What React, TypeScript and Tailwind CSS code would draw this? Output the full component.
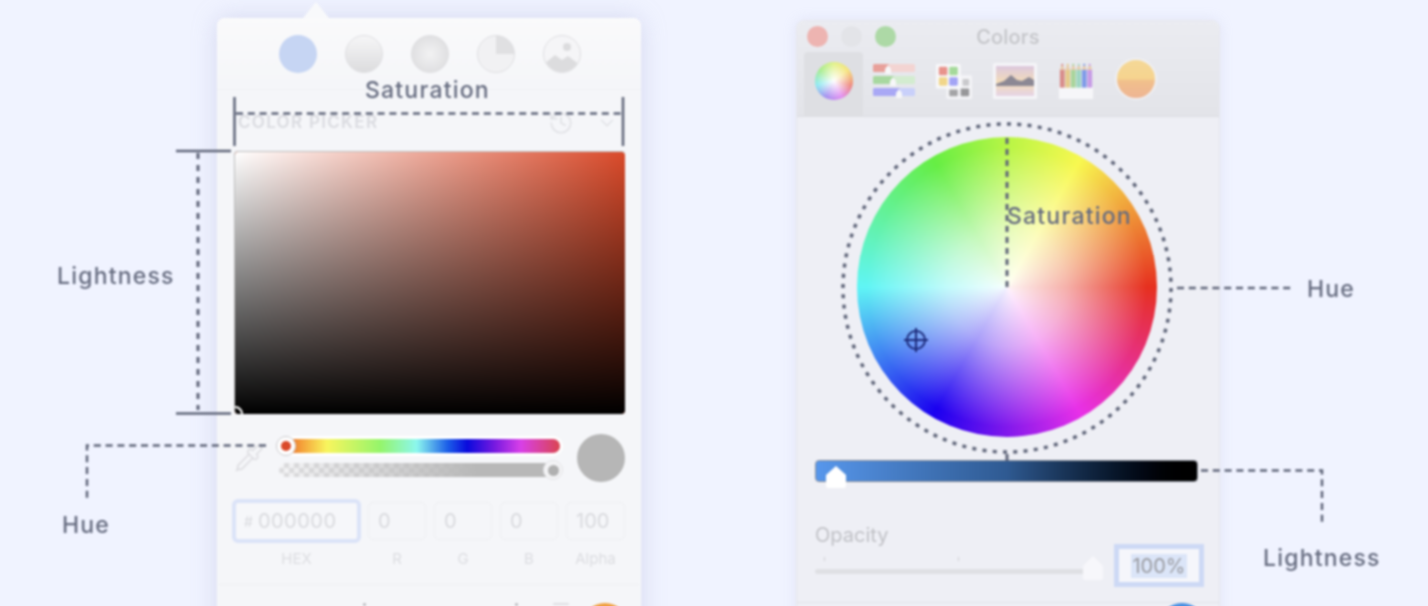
import { ChevronDown, History, Pipette } from "lucide-react";

const fields = [
  { label: "R", value: "0", width: "w-[58px]" },
  { label: "G", value: "0", width: "w-[58px]" },
  { label: "B", value: "0", width: "w-[58px]" },
  { label: "Alpha", value: "100", width: "w-[59px]" },
];

function SlidersIcon() {
  const rows = [
    { a: "#e8a09a", b: "#f3d4d2", x: 16 },
    { a: "#a8d8a0", b: "#d3ecd0", x: 21 },
    { a: "#a9a8f5", b: "#c9d0fa", x: 27 },
  ];
  return (
    <svg width="44" height="36" viewBox="0 0 44 36">
      {rows.map((r, i) => (
        <g key={i}>
          <rect x="1" y={1 + i * 12} width="42" height="8" rx="1.5" fill={r.b} />
          <rect x="1" y={1 + i * 12} width={r.x} height="8" rx="1.5" fill={r.a} />
          <path d={`M${r.x - 3} ${6 + i * 12}l3-4 3 4v5h-6z`} fill="#f7f7f9" />
        </g>
      ))}
    </svg>
  );
}

function PaletteIcon() {
  return (
    <svg width="38" height="36" viewBox="0 0 40 38">
      <rect x="12" y="13" width="27" height="25" rx="1.5" fill="#f4f4f7" />
      <rect x="29" y="17" width="7" height="7" rx="1" fill="#c9c9cc" />
      <rect x="15" y="28" width="9" height="7" rx="1" fill="#a4a4a6" />
      <rect x="27" y="27" width="9" height="8" rx="1" fill="#979799" />
      <rect x="1" y="1" width="26" height="26" rx="1.5" fill="#f8f8fa" />
      <rect x="4" y="4" width="9" height="9" rx="1.5" fill="#e8938c" />
      <rect x="15" y="4" width="9" height="9" rx="1.5" fill="#a5d99a" />
      <rect x="4" y="15" width="9" height="9" rx="1.5" fill="#f1d68a" />
      <rect x="15" y="15" width="9" height="9" rx="1.5" fill="#a3a4f5" />
    </svg>
  );
}

function PhotoIcon() {
  return (
    <svg width="44" height="36" viewBox="0 0 44 36">
      <defs>
        <linearGradient id="sky" x1="0" y1="0" x2="0" y2="1">
          <stop offset="0" stopColor="#dcc8de" />
          <stop offset="0.55" stopColor="#f3dcb8" />
          <stop offset="1" stopColor="#e5d3e6" />
        </linearGradient>
      </defs>
      <rect width="44" height="36" rx="1.5" fill="#f5f5f8" />
      <rect x="3" y="3" width="38" height="30" fill="url(#sky)" />
      <path d="M3 21l8-3 7-6 6 5 5 1 7-4 5 3v6H3z" fill="#8c8894" />
    </svg>
  );
}

function PencilsIcon() {
  const colors = ["#d88c8a", "#e6c98a", "#a8d49a", "#9ed6c2", "#7f9be8", "#c79be6"];
  return (
    <svg width="36" height="36" viewBox="0 0 36 38">
      <rect y="25" width="36" height="13" fill="#f6f6f9" />
      {colors.map((c, i) => (
        <g key={c}>
          <rect x={1 + i * 5.8} y="7" width="5" height="19" fill={c} />
          <path d={`M${1 + i * 5.8} 7l2.5-6 2.5 6z`} fill="#e8c9a8" />
          <circle cx={3.5 + i * 5.8} cy="2" r="1.2" fill={c} />
        </g>
      ))}
    </svg>
  );
}

function Annotations() {
  const ink = "#5f6579";
  return (
    <svg
      className="absolute inset-0 pointer-events-none"
      width="1428"
      height="606"
      viewBox="0 0 1428 606"
      fill="none"
      stroke={ink}
    >
      {/* color picker side */}
      <path d="M234.5 97V146M623 97V146M176 151H231M176 413.5H231" strokeWidth="2.5" />
      <path d="M236 113.5H622" strokeWidth="2.5" strokeDasharray="7 4.8" />
      <path d="M198 153V410" strokeWidth="3" strokeDasharray="6 6" />
      <path d="M266 445.5H87V498" strokeWidth="2.5" strokeDasharray="7 4.8" />
      {/* colors window side */}
      <circle cx="1007" cy="288" r="164" strokeWidth="3.5" strokeDasharray="4 6.3" />
      <path d="M1007 138V290" strokeWidth="3" strokeDasharray="6 5" />
      <path d="M1007 454V461" strokeWidth="3" />
      <path d="M1177 288H1293" strokeWidth="2.5" strokeDasharray="7 4.8" />
      <path d="M1201 470.5H1322V524" strokeWidth="2.5" strokeDasharray="7 4.8" />
    </svg>
  );
}

export default function App() {
  const label = "absolute text-[23px] font-medium leading-[28px] text-[#666c80] whitespace-nowrap tracking-[1.2px]";
  return (
    <div className="w-[1428px] h-[606px] overflow-hidden bg-[#f0f3ff]">
      <div className="relative w-[1428px] h-[606px] blur-[0.8px] flex items-start pl-[217px] pt-[18px] font-['Inter',sans-serif]">
        {/* Color picker panel */}
        <div className="relative w-[424px] h-[620px] shrink-0 rounded-t-[8px] bg-[#f5f6f9] shadow-[0_0_24px_rgba(160,165,210,0.35)]">
          <div className="absolute left-[86px] -top-[16px] w-0 h-0 border-x-[13px] border-x-transparent border-b-[16px] border-b-[#f8f9fb]" />
          <div className="h-[72px] mb-[2px] pl-[2px] border-b border-[#f0f1f4] rounded-t-[8px] bg-gradient-to-b from-[#fafafb] to-[#f5f6f9] flex items-center justify-center gap-[28px]">
            <div className="w-[38px] h-[38px] rounded-full bg-[#c6d5f3]" />
            <div className="w-[38px] h-[38px] rounded-full border border-[#dfdfe2] bg-gradient-to-b from-[#f6f6f7] to-[#dcdcde]" />
            <div className="w-[38px] h-[38px] rounded-full border border-[#dfdfe2] bg-[radial-gradient(circle,#f2f2f3_0%,#d9d9db_100%)]" />
            <div className="w-[38px] h-[38px] rounded-full border border-[#dfdfe2] bg-[conic-gradient(#e0e0e2_0deg_90deg,#f1f1f3_90deg_360deg)]" />
            <div className="w-[38px] h-[38px] rounded-full border border-[#dfdfe2] overflow-hidden bg-[#f5f5f7]">
              <svg width="36" height="36" viewBox="0 0 36 36">
                <circle cx="23" cy="11" r="4" fill="#dcdcde" />
                <path d="M0 28l11-9 7 5 6-4 12 9v7H0z" fill="#dcdcde" />
              </svg>
            </div>
          </div>

          <div className="h-[59px] pt-[2px] pl-[21px] pr-[23px] flex items-center justify-between">
            <span className="text-[17px] font-semibold tracking-[1.3px] text-[#dadbe0]">COLOR PICKER</span>
            <div className="flex items-center gap-[22px] text-[#e0e1e5]">
              <History size={26} strokeWidth={1.5} />
              <ChevronDown size={22} strokeWidth={1.5} />
            </div>
          </div>

          <div className="relative ml-[17px] w-[391px] h-[263px] rounded-[4px] overflow-hidden bg-[#da4a2a] border-t border-l border-[#bdbdbd]">
            <div className="w-full h-full bg-gradient-to-r from-white to-transparent">
              <div className="w-full h-full bg-gradient-to-b from-transparent to-black" />
            </div>
            <div className="absolute -left-[8px] -bottom-[8px] w-[16px] h-[16px] rounded-full border-2 border-white" />
          </div>

          <div className="mt-[20px] ml-[17px] flex items-start">
            <div className="w-[30px] pt-[6px] text-[#dedee2]">
              <Pipette size={30} strokeWidth={1.4} className="-scale-x-100 rotate-90 mt-[3px]" />
            </div>
            <div className="ml-[15px] w-[283px] pt-[5px] flex flex-col gap-[10px]">
              <div className="relative h-[14px] w-[281px] rounded-full ring-[3px] ring-white bg-[linear-gradient(90deg,#da4a2a_0%,#f5a03a_8%,#f8f55e_17%,#95f56b_36%,#8cf7ee_49%,#1c5fe8_60%,#0a0add_67%,#7a1ae0_77%,#d840e8_86%,#da4550_100%)]">
                <div className="absolute -left-[3px] -top-[3px] w-[20px] h-[20px] rounded-full bg-white border border-[#c8c8cc] flex items-center justify-center">
                  <div className="w-[10px] h-[10px] rounded-full bg-[#da4a2a]" />
                </div>
              </div>
              <div className="relative h-[14px] rounded-full bg-[linear-gradient(90deg,rgba(184,184,184,0)_0%,#b8b8b8_70%),repeating-conic-gradient(#dcdcde_0_25%,#f4f4f6_0_50%)] bg-[length:100%_100%,10px_10px]">
                <div className="absolute -right-[1px] -top-[3px] w-[20px] h-[20px] rounded-full bg-[#f4f4f6] border border-[#e4e4e7] flex items-center justify-center">
                  <div className="w-[11px] h-[11px] rounded-full bg-[#b0b0b0]" />
                </div>
              </div>
            </div>
            <div className="ml-[15px] w-[48px] h-[48px] rounded-full bg-[#b6b6b6]" />
          </div>

          <div className="mt-[17px] pl-[15px] flex items-center gap-[8px] text-[20px] text-[#d9dade]">
            <div className="w-[129px] -mr-px h-[44px] rounded-[6px] border-[4px] border-[#dbe3f8] pl-[8px] flex items-center gap-[5px] bg-[#f6f7fa]">
              <span className="text-[14px]">#</span>
              <span className="tracking-[0.5px]">000000</span>
            </div>
            {fields.map((f) => (
              <div
                key={f.label}
                className={`${f.width} h-[38px] rounded-[5px] border border-[#eeeff2] flex items-center pl-[9px]`}
              >
                {f.value}
              </div>
            ))}
          </div>
          <div className="mt-[6px] pl-[15px] flex gap-[8px] text-[15px] leading-[20px] text-[#dcdde1]">
            <div className="w-[129px] -mr-px text-center">HEX</div>
            {fields.map((f) => (
              <div key={f.label} className={`${f.width} text-center`}>
                {f.label}
              </div>
            ))}
          </div>
          <div className="mt-[15px] mx-[2px] border-t border-[#eeeff2]" />
          <div className="absolute left-[146px] top-[585px] w-[3px] h-[3px] rounded-full bg-[#b4b4b8]" />
          <div className="absolute left-[298px] top-[585px] w-[3px] h-[3px] rounded-full bg-[#b4b4b8]" />
          <div className="absolute left-[336px] top-[585px] w-[16px] h-[2px] rounded-full bg-[#dedee2]" />
          <div className="mt-[18px] ml-[365px] w-[46px] h-[46px] rounded-full bg-[#f0a040]" />
        </div>

        {/* Colors window */}
        <div className="mt-[2px] ml-[155px] w-[424px] h-[620px] shrink-0 rounded-t-[8px] border border-[#e6e7ee] bg-[#eeeff5] shadow-[0_0_14px_rgba(170,175,215,0.2)]">
          <div className="h-[96px] rounded-t-[8px] bg-gradient-to-b from-[#ebecf1] to-[#e3e4e9] border-b border-[#dcdde2]">
            <div className="h-[31px] px-[10px] grid grid-cols-[1fr_auto_1fr] items-center">
              <div className="flex gap-[13px]">
                <div className="w-[21px] h-[21px] rounded-full bg-[#edb4b1]" />
                <div className="w-[21px] h-[21px] rounded-full bg-[#e3e4e8]" />
                <div className="w-[21px] h-[21px] rounded-full bg-[#add9a6]" />
              </div>
              <span className="text-[20px] font-medium tracking-[0.2px] text-[#c4c5c9]">Colors</span>
            </div>
            <div className="h-[65px] pl-[7px] flex items-center">
              <div className="w-[59px] h-[65px] rounded-t-[4px] bg-[#dedfe3] flex items-center justify-center pb-[8px]">
                <div className="relative w-[38px] h-[38px] rounded-full overflow-hidden bg-[conic-gradient(#dff07a,#f5e06a,#ec7a6a,#dd80f0,#9a80ee,#80e8f0,#9cea80,#dff07a)]">
                  <div className="w-full h-full bg-[radial-gradient(circle,white_0%,transparent_75%)]" />
                </div>
              </div>
              <div className="ml-[9px] mb-[8px]"><SlidersIcon /></div>
              <div className="ml-[19px] mb-[8px]"><PaletteIcon /></div>
              <div className="ml-[20px] mb-[8px]"><PhotoIcon /></div>
              <div className="ml-[21px] mb-[8px]"><PencilsIcon /></div>
              <div className="ml-[21px] mb-[12px] w-[42px] h-[42px] rounded-full border-2 border-[#f0f0f3] bg-[linear-gradient(180deg,#f5d897_0%,#f6d48f_48%,#f1bf8c_56%,#eeb594_100%)]" />
            </div>
          </div>

          <div className="relative mt-[20px] ml-[60px] w-[300px] h-[300px] rounded-full overflow-hidden bg-[conic-gradient(#b8f545_0deg,#f8f850_30deg,#e6301f_90deg,#e830e8_150deg,#1a00f0_210deg,#60f5f5_270deg,#66ee44_330deg,#b8f545_360deg)]">
            <div className="w-full h-full bg-[radial-gradient(circle,rgba(255,255,255,0.95)_0%,rgba(255,255,255,0.62)_28%,rgba(255,255,255,0)_66%)]" />
            <svg className="absolute left-[47px] top-[191px]" width="24" height="24" viewBox="0 0 24 24" fill="none" stroke="#1c2a7a" strokeWidth="2">
              <circle cx="12" cy="12" r="9" />
              <path d="M12 0V24M0 12H24" />
            </svg>
          </div>

          <div className="relative mt-[23px] ml-[18px] w-[383px] h-[22px] rounded-[4px] border border-[#8a8f99] bg-gradient-to-r from-[#5797ec] via-[#2f5a92] to-black">
            <svg className="absolute left-[9px] top-[4px]" width="22" height="24" viewBox="0 0 22 24">
              <path d="M11 1L21 10V21Q21 23 19 23H3Q1 23 1 21V10Z" fill="white" />
            </svg>
          </div>

          <div className="mt-[41px] pl-[18px] flex items-start">
            <div className="w-[299px]">
              <div className="text-[20px] leading-[24px] text-[#c0c1c6]">Opacity</div>
              <div className="relative mt-[22px] h-[5px] w-[281px] rounded-full bg-[#dfe0e4]">
                <div className="absolute left-[9px] -top-[12px] w-px h-[4px] bg-[#cfcfd3]" />
                <div className="absolute left-[143px] -top-[12px] w-px h-[4px] bg-[#cfcfd3]" />
                <svg className="absolute left-[267px] -top-[14px]" width="22" height="26" viewBox="0 0 22 26">
                  <path d="M11 1L21 11V23Q21 25 19 25H3Q1 25 1 23V11Z" fill="#f7f7fb" />
                </svg>
              </div>
            </div>
            <div className="mt-[21px] w-[90px] h-[43px] border-[5px] border-[#cdd9f5] bg-[#f5f6fb] flex items-center justify-center">
              <span className="px-[1px] bg-[#dbe5f8] text-[20px] leading-[24px] text-[#9a9ba0]">100%</span>
            </div>
          </div>
          <div className="mt-[15px] border-t border-[#e2e3e8]" />
          <div className="mt-[0px] ml-[362px] w-[46px] h-[46px] rounded-full bg-[#4a90e2]" />
        </div>

        <Annotations />
        <span className={`${label} left-[365px] top-[76px]`}>Saturation</span>
        <span className={`${label} left-[57px] top-[262px]`}>Lightness</span>
        <span className={`${label} left-[62px] top-[511px]`}>Hue</span>
        <span className={`${label} left-[1007px] top-[202px]`}>Saturation</span>
        <span className={`${label} left-[1307px] top-[275px]`}>Hue</span>
        <span className={`${label} left-[1263px] top-[544px]`}>Lightness</span>
      </div>
    </div>
  );
}
